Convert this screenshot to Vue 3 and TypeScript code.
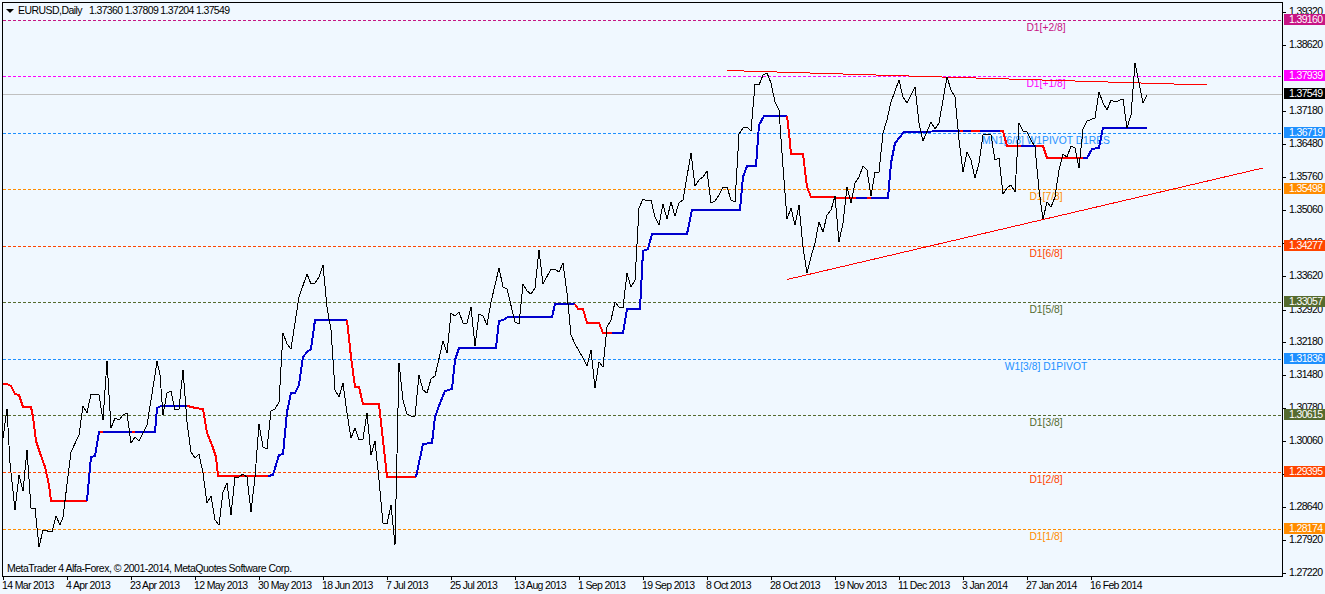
<script setup lang="ts">
interface Level { y: number; price: string; color: string; text: string; tx: number }

const BLUE = '#0000cd'
const RED = '#ff0000'

const levels: Level[] = [
  { y: 20, price: '1.39160', color: '#c71585', text: 'D1[+2/8]', tx: 1046 },
  { y: 76, price: '1.37939', color: '#ff00ff', text: 'D1[+1/8]', tx: 1046 },
  { y: 133, price: '1.36719', color: '#1e90ff', text: 'MN1[6/8] W1PIVOT D1RES', tx: 1046 },
  { y: 189, price: '1.35498', color: '#ff8c00', text: 'D1[7/8]', tx: 1046 },
  { y: 246, price: '1.34277', color: '#ff4500', text: 'D1[6/8]', tx: 1046 },
  { y: 302, price: '1.33057', color: '#556b2f', text: 'D1[5/8]', tx: 1046 },
  { y: 359, price: '1.31836', color: '#1e90ff', text: 'W1[3/8] D1PIVOT', tx: 1046 },
  { y: 415, price: '1.30615', color: '#556b2f', text: 'D1[3/8]', tx: 1046 },
  { y: 472, price: '1.29395', color: '#ff4500', text: 'D1[2/8]', tx: 1046 },
  { y: 529, price: '1.28174', color: '#ff8c00', text: 'D1[1/8]', tx: 1046 },
]

const ticks: { y: number; label: string }[] = [
  { y: 12, label: '1.39320' }, { y: 45, label: '1.38620' }, { y: 111, label: '1.37180' },
  { y: 144, label: '1.36480' }, { y: 177, label: '1.35760' }, { y: 210, label: '1.35060' },
  { y: 243, label: '1.34340' }, { y: 276, label: '1.33620' }, { y: 310, label: '1.32920' },
  { y: 342, label: '1.32180' }, { y: 375, label: '1.31480' }, { y: 408, label: '1.30780' },
  { y: 441, label: '1.30060' }, { y: 474, label: '1.29340' }, { y: 507, label: '1.28640' },
  { y: 540, label: '1.27920' }, { y: 573, label: '1.27220' },
]

const dates = [
  '14 Mar 2013', '4 Apr 2013', '23 Apr 2013', '12 May 2013', '30 May 2013', '18 Jun 2013',
  '7 Jul 2013', '25 Jul 2013', '13 Aug 2013', '1 Sep 2013', '19 Sep 2013', '8 Oct 2013',
  '28 Oct 2013', '19 Nov 2013', '11 Dec 2013', '3 Jan 2014', '27 Jan 2014', '16 Feb 2014',
]

const closeLine =
  '3,438 7,409 10,463 15,510 19,475 23,491 27,450 31,508 35,508 39,547 43,530 52,532 56,516 60,525 63,517 71,452 79,435 83,406 87,413 91,394 99,395 103,420 107,361 111,428 115,418 119,420 123,415 127,413 131,443 135,437 139,441 147,425 155,375 157,361 160,375 163,415 167,393 171,391 175,410 179,409 183,370 187,422 191,452 195,458 199,454 203,473 207,503 211,496 215,520 219,525 223,492 227,483 231,515 235,477 239,477 243,474 247,477 251,512 255,477 259,424 263,447 267,449 271,411 275,409 279,402 283,333 287,344 291,349 299,297 307,274 311,284 315,283 319,277 323,265 327,307 331,330 335,390 339,397 343,383 347,413 351,438 355,428 359,440 363,439 367,413 371,455 375,441 379,480 383,523 387,524 391,505 395,545 399,363 403,400 407,414 411,416 415,416 419,375 423,390 427,393 431,379 435,376 443,341 447,353 451,313 455,316 459,312 463,323 467,323 471,307 475,346 479,314 483,316 487,325 491,302 499,268 503,287 507,289 515,322 519,324 523,284 527,291 531,294 535,288 539,250 543,284 551,269 555,269 559,272 563,263 567,293 571,335 575,344 583,358 587,366 591,350 595,388 599,362 603,367 607,327 611,320 615,302 619,307 623,308 627,273 631,287 635,280 639,208 643,199 647,201 651,200 655,217 659,225 663,204 667,219 671,202 675,216 679,203 683,200 691,153 695,186 699,180 703,177 707,171 711,203 715,201 719,195 723,187 727,187 731,200 735,202 739,134 743,128 747,127 751,131 755,84 759,85 763,75 767,73 771,83 775,102 779,110 783,167 787,219 791,208 795,225 799,205 803,247 807,273 811,257 815,243 819,222 823,232 827,215 831,210 835,196 839,242 843,223 847,187 851,203 855,183 859,177 863,166 867,170 871,196 875,172 879,172 883,133 887,120 891,102 899,80 903,97 907,103 915,87 919,123 923,141 931,122 935,129 939,123 947,77 951,90 955,97 959,140 963,172 967,152 971,160 975,178 979,163 983,135 987,134 991,135 995,160 999,158 1003,194 1007,188 1011,185 1015,192 1019,123 1023,131 1027,132 1031,140 1035,147 1039,190 1043,219 1047,202 1051,207 1055,197 1059,170 1063,154 1067,157 1071,146 1075,148 1079,168 1083,129 1087,121 1095,118 1099,92 1103,103 1107,110 1111,100 1115,102 1123,99 1127,128 1131,115 1135,63 1139,83 1143,103 1147,95'

const stepLine: { color: string; points: string }[] = [
  { color: RED, points: '3,384 7,384 11,386 15,394 19,395 23,407 31,407 33,417 36,441 40,453 45,467 49,485 51,501 87,501' },
  { color: BLUE, points: '87,501 91,457 95,456 99,432 100,432' },
  { color: RED, points: '100,432 103,432' },
  { color: BLUE, points: '103,432 132,432' },
  { color: RED, points: '132,432 135,432' },
  { color: BLUE, points: '135,432 155,432 157,408 161,406 187,406' },
  { color: RED, points: '187,406 192,407 195,408 203,409 207,433 212,445 216,457 218,476 268,476' },
  { color: BLUE, points: '268,476 273,475 279,455 283,454 287,412 291,393 295,393 299,385 303,357 307,352 311,349 315,320 347,320' },
  { color: RED, points: '347,320 351,357 355,387 359,387 363,404 379,404 383,440 387,477 416,477' },
  { color: BLUE, points: '416,477 423,444 432,443 435,417 440,403 445,391 452,389 455,360 459,348 496,348 499,321 503,320 508,317 552,317 555,304 575,304' },
  { color: RED, points: '575,304 578,309 583,309 587,323 599,323 603,333 612,333' },
  { color: BLUE, points: '612,333 623,333 627,309 640,309 643,251 648,249 652,234 687,234 692,210 740,210 743,177 747,166 756,166 759,125 764,116 787,116' },
  { color: RED, points: '787,116 789,133 791,154 803,154 807,187 811,197 856,198' },
  { color: BLUE, points: '856,198 867,198' },
  { color: RED, points: '867,198 871,198' },
  { color: BLUE, points: '871,198 888,198 891,163 895,143 904,132 960,131' },
  { color: RED, points: '960,131 963,131' },
  { color: BLUE, points: '963,131 971,131' },
  { color: RED, points: '971,131 980,131' },
  { color: BLUE, points: '980,131 1000,131' },
  { color: RED, points: '1000,131 1003,131 1007,146 1021,146' },
  { color: BLUE, points: '1021,146 1036,146' },
  { color: RED, points: '1036,146 1043,146 1047,158 1083,158' },
  { color: BLUE, points: '1083,158 1087,158 1092,149 1099,148 1103,128 1147,128' },
]
</script>

<template>
  <div class="terminal">
    <div class="chart-row">
      <div class="plot">
        <svg class="canvas" viewBox="3 3 1279 573" width="1279" height="573">
          <g shape-rendering="crispEdges">
            <line x1="3" x2="1282" y1="94.5" y2="94.5" stroke="#c0c0c0" />
            <line
              v-for="l in levels"
              :key="l.y"
              x1="3"
              x2="1282"
              :y1="l.y + 0.5"
              :y2="l.y + 0.5"
              :stroke="l.color"
              stroke-dasharray="3 2"
            />
          </g>
          <text
            v-for="l in levels"
            :key="l.text + l.y"
            class="level-text"
            :x="l.tx"
            :y="l.y + 11"
            :fill="l.color"
          >{{ l.text }}</text>
          <g fill="none" shape-rendering="crispEdges">
            <polyline
              v-for="(s, i) in stepLine"
              :key="i"
              :points="s.points"
              :stroke="s.color"
              stroke-width="2"
            />
            <line x1="727" y1="70.5" x2="1207" y2="85" stroke="#ff0000" />
            <line x1="787" y1="279.5" x2="1263" y2="168" stroke="#ff0000" />
            <polyline :points="closeLine" stroke="#000000" />
          </g>
        </svg>
        <div class="header">
          <span class="marker"></span>
          <span class="symbol">EURUSD,Daily</span>
          <span class="ohlc">1.37360 1.37809 1.37204 1.37549</span>
        </div>
        <div class="copyright">MetaTrader 4 Alfa-Forex, © 2001-2014, MetaQuotes Software Corp.</div>
      </div>
      <div class="price-axis">
        <div v-for="t in ticks" :key="t.label" class="tick" :style="{ top: t.y + 'px' }">
          <span class="tick-mark"></span>
          <span class="tick-label">{{ t.label }}</span>
        </div>
        <div class="price-tag last" :style="{ top: '94px' }">1.37549</div>
        <div
          v-for="l in levels"
          :key="l.price"
          class="price-tag"
          :style="{ top: l.y + 'px', background: l.color }"
        >{{ l.price }}</div>
      </div>
    </div>
    <div class="time-axis">
      <div v-for="d in dates" :key="d" class="time-cell">{{ d }}</div>
    </div>
  </div>
</template>

<style>
html,
body {
  margin: 0;
  background: #f0f8ff;
}
</style>

<style scoped>
.terminal {
  width: 1325px;
  height: 594px;
  background: #f0f8ff;
  color: #000;
  font-family: "Liberation Sans", Arial, sans-serif;
  font-size: 10.5px;
  letter-spacing: -0.65px;
  overflow: hidden;
  box-sizing: border-box;
  padding-top: 2px;
  display: flex;
  flex-direction: column;
}
.chart-row {
  display: flex;
  height: 575px;
}
.plot {
  position: relative;
  width: 1281px;
  height: 575px;
  margin-left: 2px;
  box-sizing: border-box;
  border: 1px solid #000;
  flex: none;
}
.canvas {
  position: absolute;
  left: 0;
  top: 0;
  display: block;
}
.level-text {
  font-family: "Liberation Sans", Arial, sans-serif;
  font-size: 10.3px;
  letter-spacing: 0;
  text-anchor: middle;
}
.header {
  position: relative;
  display: flex;
  align-items: center;
  height: 15px;
  padding-left: 3px;
  line-height: 15px;
}
.marker {
  width: 0;
  height: 0;
  border-left: 4px solid transparent;
  border-right: 4px solid transparent;
  border-top: 4px solid #000;
  margin-right: 4px;
}
.symbol {
  letter-spacing: -0.55px;
  margin-right: 7px;
}
.copyright {
  position: absolute;
  left: 4px;
  bottom: 1px;
  line-height: 13px;
  letter-spacing: -0.5px;
}
.price-axis {
  position: relative;
  flex: 1;
  margin-top: -2px;
  height: 577px;
}
.tick {
  position: absolute;
  left: 0;
  height: 1px;
  width: 42px;
}
.tick-mark {
  position: absolute;
  left: 0;
  top: 0;
  width: 3px;
  height: 1px;
  background: #000;
}
.tick-label {
  position: absolute;
  left: 6px;
  top: -7px;
  line-height: 13px;
}
.price-tag {
  position: absolute;
  left: 1px;
  width: 41px;
  height: 11px;
  margin-top: -6px;
  box-sizing: border-box;
  padding-left: 5px;
  line-height: 11px;
  color: #fff;
}
.price-tag.last {
  background: #000;
}
.time-axis {
  display: flex;
  height: 17px;
  margin-left: 3px;
}
.time-cell {
  position: relative;
  width: 64px;
  flex: none;
  line-height: 17px;
  white-space: nowrap;
  text-indent: -1px;
}
.time-cell::before {
  content: "";
  position: absolute;
  left: 0;
  top: 0;
  width: 1px;
  height: 3px;
  background: #000;
}
</style>
